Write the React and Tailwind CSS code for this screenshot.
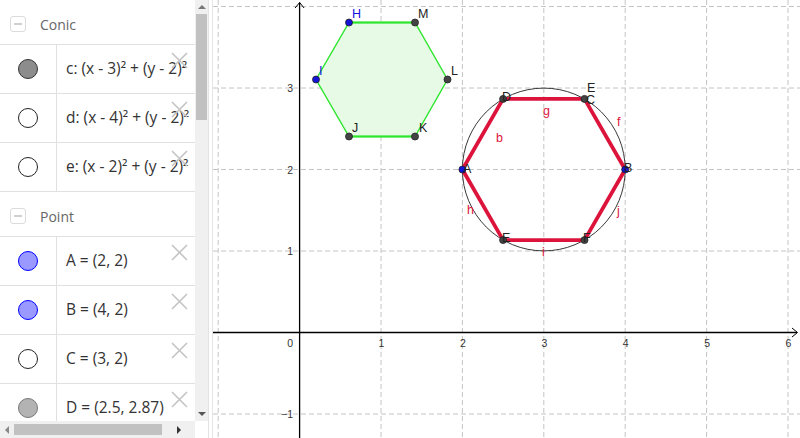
import React from "react";

const X0 = 299.6;
const Y0 = 332.5;
const U = 81.4;
const UY = 81.5;
const px = (x) => X0 + U * x;
const py = (y) => Y0 - UY * y;

function XIcon() {
  return (
    <svg className="absolute right-[7px] top-[7px]" width="17" height="17" viewBox="0 0 17 17">
      <path d="M1 1 L16 16 M16 1 L1 16" stroke="#c4c4c4" strokeWidth="1.6" fill="none" />
    </svg>
  );
}

function Header({ title }) {
  return (
    <div className="h-[45px] shrink-0 border-b border-[#e0e0e0] flex items-center pt-[4px]">
      <div className="ml-[10px] w-[16px] h-[16px] rounded-[3px] border border-[#dcdcdc] flex items-center justify-center">
        <div className="w-[8px] h-[1.5px] bg-[#cfcfcf]" />
      </div>
      <span className="ml-[14px] text-[14px] text-[#666] font-['Open_Sans',sans-serif]">{title}</span>
    </div>
  );
}

function Row({ text, circle }) {
  return (
    <div className="relative h-[49px] shrink-0 border-b border-[#e0e0e0] flex">
      <div className="w-[57px] shrink-0 border-r border-[#e0e0e0] flex items-center justify-center">
        <div className={"w-[20px] h-[20px] rounded-full border " + circle} />
      </div>
      <div className="flex-1 min-w-0 overflow-hidden flex items-center pl-[9px]">
        <span className="whitespace-nowrap text-[15.5px] text-[#333] font-['Open_Sans',sans-serif]">{text}</span>
      </div>
      <XIcon />
    </div>
  );
}

const gray = "bg-[#8c8c8c] border-[#333]";
const white = "bg-white border-[#222]";
const blue = "bg-[#9999ff] border-[#0000ff]";
const lgray = "bg-[#b3b3b3] border-[#777]";

const LAB = "text-[12.5px] font-['Liberation_Sans',Arial,sans-serif]";
const DARK = LAB + " fill-[#222]";
const BLUE = LAB + " fill-[#1414e0]";
const RED = LAB + " fill-[#dc143c]";
const NUM = "text-[10.5px] fill-[#333] font-['Liberation_Sans',Arial,sans-serif]";

function Graph() {
  const vx = [-1, 1, 2, 3, 4, 5, 6].map(px);
  const hy = [4, 3, 2, 1, -1].map(py);
  const hexG = [
    [349, 22.5],
    [415, 22.5],
    [447.5, 79.5],
    [415, 136.5],
    [349, 136.5],
    [316, 79.5],
  ];
  const A = [px(2), py(2)];
  const B = [px(4), py(2)];
  const C = [px(3.5), py(2.866)];
  const D = [px(2.5), py(2.866)];
  const E = [px(2.5), py(1.134)];
  const F = [px(3.5), py(1.134)];
  const red = [D, C, B, F, E, A];
  return (
    <svg width="587" height="438" viewBox="0 0 587 438" className="block">
      <g transform="translate(-213 0)">
        {vx.map((x, i) => (
          <line key={"v" + i} x1={x} y1="0" x2={x} y2="438" stroke="#c4c4c4" strokeWidth="1" strokeDasharray="5 3" />
        ))}
        {hy.map((y, i) => (
          <line key={"h" + i} x1="213" y1={y} x2="800" y2={y} stroke="#c4c4c4" strokeWidth="1" strokeDasharray="5 3" />
        ))}
        <line x1="213" y1={Y0} x2="797" y2={Y0} stroke="#000" strokeWidth="1.3" />
        <path d={`M792 ${Y0 - 4.5} L797.5 ${Y0} L792 ${Y0 + 4.5}`} stroke="#000" strokeWidth="1" fill="none" />
        <line x1={X0} y1="438" x2={X0} y2="2.5" stroke="#000" strokeWidth="1.3" />
        <path d={`M${X0 - 4.5} 8 L${X0} 2.5 L${X0 + 4.5} 8`} stroke="#000" strokeWidth="1" fill="none" />
        {[1, 2, 3, 4, 5, 6].map((n) => (
          <text key={"xn" + n} x={px(n) + 0.5} y="347" textAnchor="middle" className={NUM}>{n}</text>
        ))}
        <text x="293" y="347" textAnchor="end" className={NUM}>0</text>
        {[3, 2, 1].map((n) => (
          <text key={"yn" + n} x="293" y={py(n) + 4} textAnchor="end" className={NUM}>{n}</text>
        ))}
        <text x="293" y={py(-1) + 4} textAnchor="end" className={NUM}>−1</text>
        <polygon
          points={hexG.map((p) => p.join(",")).join(" ")}
          fill="#e6fae6"
          stroke="#2ee62e"
          strokeWidth="1.4"
        />
        <line x1="349" y1="22.5" x2="415" y2="22.5" stroke="#2ee62e" strokeWidth="2" />
        <line x1="349" y1="136.5" x2="415" y2="136.5" stroke="#2ee62e" strokeWidth="2" />
        {hexG.map((p, i) => (
          <circle key={"g" + i} cx={p[0]} cy={p[1]} r="3.5" fill={i === 0 || i === 5 ? "#1414d8" : "#444"} stroke="#222" strokeWidth="0.8" />
        ))}
        <text x="352" y="18" className={BLUE}>H</text>
        <text x="418" y="18" className={DARK}>M</text>
        <text x="451" y="75" className={DARK}>L</text>
        <text x="419" y="132" className={DARK}>K</text>
        <text x="352" y="132" className={DARK}>J</text>
        <text x="319" y="75" className={BLUE}>I</text>
        <circle cx={px(3)} cy={py(2)} r={U} fill="none" stroke="#222" strokeWidth="0.9" />
        <polygon points={red.map((p) => p.join(",")).join(" ")} fill="none" stroke="#dc143c" strokeWidth="3.8" strokeLinejoin="round" />
        {[D, C, E, F].map((p, i) => (
          <circle key={"r" + i} cx={p[0]} cy={p[1]} r="3.5" fill="#444" stroke="#222" strokeWidth="0.8" />
        ))}
        {[A, B].map((p, i) => (
          <circle key={"b" + i} cx={p[0]} cy={p[1]} r="3.5" fill="#1414d8" stroke="#222" strokeWidth="0.8" />
        ))}
        <text x="502" y="101" className={DARK}>D</text>
        <text x="587" y="92" className={DARK}>E</text>
        <text x="586" y="104" className={DARK}>C</text>
        <text x="463" y="173" className={DARK}>A</text>
        <text x="624" y="172" className={DARK}>B</text>
        <text x="502" y="242" className={DARK}>E</text>
        <text x="583" y="242" className={DARK}>F</text>
        <text x="543" y="115" className={RED}>g</text>
        <text x="617" y="126" className={RED}>f</text>
        <text x="496" y="142" className={RED}>b</text>
        <text x="467" y="214" className={RED}>h</text>
        <text x="617" y="215" className={RED}>j</text>
        <text x="542" y="256" className={RED}>i</text>
      </g>
    </svg>
  );
}

export default function App() {
  return (
    <div className="flex w-[800px] h-[438px] overflow-hidden bg-white">
      <div className="w-[209px] h-full shrink-0 flex flex-col border-r border-[#e3e3e3]">
        <div className="flex flex-1 min-h-0">
          <div className="w-[195px] shrink-0 overflow-hidden flex flex-col">
            <Header title="Conic" />
            <Row text="c: (x - 3)² + (y - 2)²" circle={gray} />
            <Row text="d: (x - 4)² + (y - 2)²" circle={white} />
            <Row text="e: (x - 2)² + (y - 2)²" circle={white} />
            <Header title="Point" />
            <Row text="A = (2, 2)" circle={blue} />
            <Row text="B = (4, 2)" circle={blue} />
            <Row text="C = (3, 2)" circle={white} />
            <Row text="D = (2.5, 2.87)" circle={lgray} />
          </div>
          <div className="w-[13px] shrink-0 bg-[#f0f0f0] flex flex-col items-center">
            <div className="h-[14px] flex items-center justify-center">
              <div className="w-0 h-0 border-l-[4px] border-r-[4px] border-b-[4px] border-l-transparent border-r-transparent border-b-[#777]" />
            </div>
            <div className="w-[11px] h-[106px] bg-[#c1c1c1]" />
            <div className="flex-1" />
            <div className="h-[14px] flex items-center justify-center">
              <div className="w-0 h-0 border-l-[4px] border-r-[4px] border-t-[4px] border-l-transparent border-r-transparent border-t-[#555]" />
            </div>
          </div>
        </div>
        <div className="h-[17px] shrink-0 flex">
          <div className="w-[195px] shrink-0 bg-[#f0f0f0] flex items-center">
            <div className="w-[14px] flex items-center justify-center">
              <div className="w-0 h-0 border-t-[4px] border-b-[4px] border-r-[4px] border-t-transparent border-b-transparent border-r-[#888]" />
            </div>
            <div className="w-[148px] h-[11px] bg-[#c1c1c1]" />
            <div className="flex-1 flex items-center justify-center">
              <div className="w-0 h-0 border-t-[4px] border-b-[4px] border-l-[4px] border-t-transparent border-b-transparent border-l-[#333]" />
            </div>
          </div>
          <div className="flex-1 bg-white" />
        </div>
      </div>
      <div className="w-[3px] shrink-0" />
      <div className="flex-1 border-l border-[#e6e6e6] relative overflow-hidden">
        <Graph />
      </div>
    </div>
  );
}
